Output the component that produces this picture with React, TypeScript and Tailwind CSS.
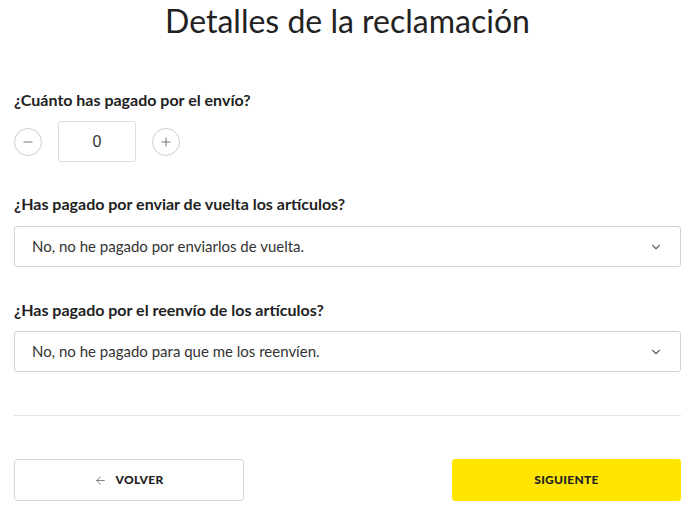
import { ChevronDown, Minus, Plus, ArrowLeft } from "lucide-react";

const font = { fontFamily: "Lato, 'Liberation Sans', sans-serif" };

const Select = ({ value }: { value: string }) => (
    <div className="flex items-center justify-between h-[41px] border border-[#d3d3d3] rounded-[3px] pl-[17px] pr-[17px] bg-white">
        <span className="text-[15px] text-[#333]">{value}</span>
        <ChevronDown size={14} strokeWidth={2} className="text-[#666]" />
    </div>
);

const Label = ({ children }: { children: React.ReactNode }) => (
    <h3 className="font-bold text-[16px] text-[#222] leading-5">{children}</h3>
);

const App = () => {
    return <div className="w-[695px] h-[511px] bg-white px-[14px] flex flex-col text-[#222]" style={font}>
        <h1 className="text-center font-normal text-[32px] leading-[40px] text-[#222] mt-[1px]">Detalles de la reclamación</h1>

        <section className="mt-[49px] flex flex-col">
            <Label>¿Cuánto has pagado por el envío?</Label>
            <div className="flex items-center gap-4 mt-[11px]">
                <button className="w-7 h-7 rounded-full border border-[#ccc] flex items-center justify-center text-[#666]">
                    <Minus size={14} strokeWidth={1.5} />
                </button>
                <div className="w-[78px] h-[41px] border border-[#ddd] rounded-[3px] flex items-center justify-center text-[16px] text-[#333]" style={{ fontFamily: "'Liberation Sans', Arial, sans-serif" }}>0</div>
                <button className="w-7 h-7 rounded-full border border-[#ccc] flex items-center justify-center text-[#666]">
                    <Plus size={14} strokeWidth={1.5} />
                </button>
            </div>
        </section>

        <section className="mt-[32px] flex flex-col gap-[12px]">
            <Label>¿Has pagado por enviar de vuelta los artículos?</Label>
            <Select value="No, no he pagado por enviarlos de vuelta." />
        </section>

        <section className="mt-[33px] flex flex-col gap-[11px]">
            <Label>¿Has pagado por el reenvío de los artículos?</Label>
            <Select value="No, no he pagado para que me los reenvíen." />
        </section>

        <hr className="mt-[43px] border-t border-[#e3e3e3]" />

        <div className="flex justify-between mt-[43px]">
            <button className="w-[230px] h-[42px] border border-[#d6d6d6] rounded-[3px] flex items-center justify-center gap-2 text-[12px] font-black tracking-[0.3px] text-[#222]">
                <ArrowLeft size={13} strokeWidth={1.5} className="text-[#666]" />
                VOLVER
            </button>
            <button className="w-[229px] h-[42px] bg-[#ffe500] rounded-[3px] flex items-center justify-center text-[12px] font-black tracking-[0.3px] text-[#222]">
                SIGUIENTE
            </button>
        </div>
    </div>
}

export default App
